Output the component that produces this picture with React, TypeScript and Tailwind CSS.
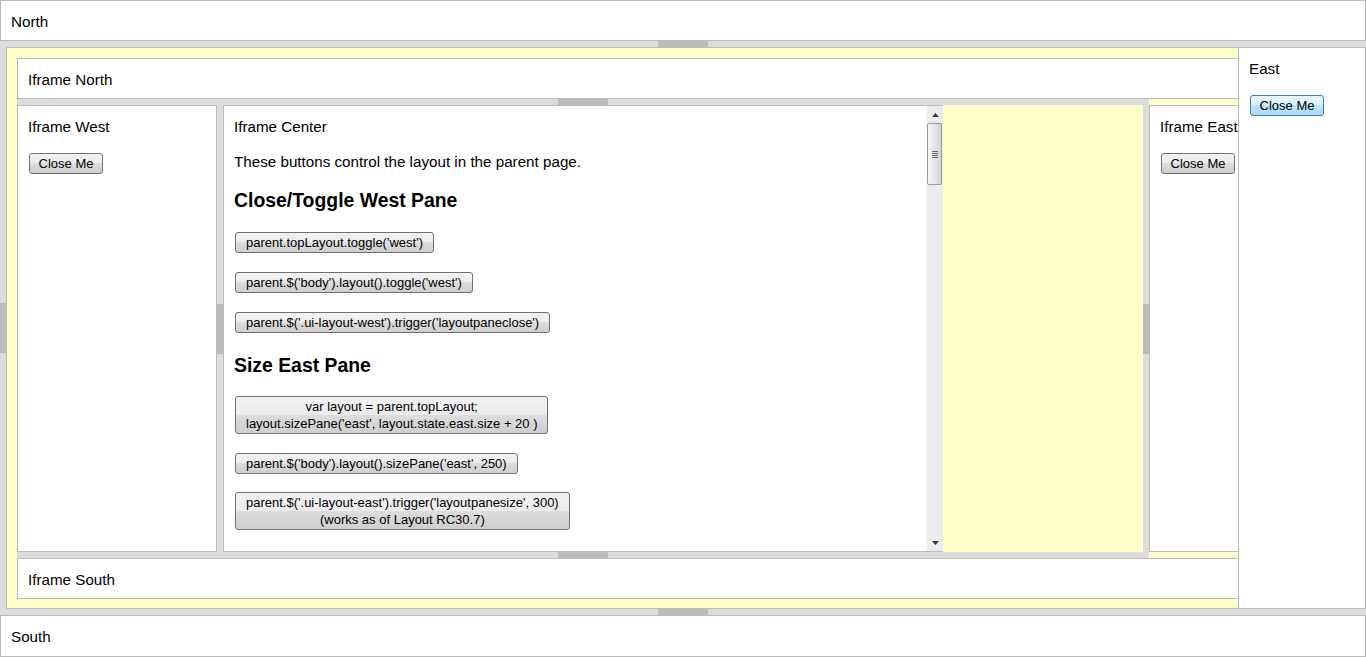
import React from "react";

const HResizer = ({ w }: { w?: string }) => (
  <div className={"h-[6px] shrink-0 bg-[#dddddd] flex justify-center " + (w ?? "w-full")}>
    <div className="w-[50px] h-full bg-[#bcbcbc]" />
  </div>
);

const VResizer = () => (
  <div className="w-[6px] shrink-0 bg-[#dddddd] flex items-center">
    <div className="h-[50px] w-full bg-[#bcbcbc]" />
  </div>
);

const Btn = ({ children, mt }: { children: React.ReactNode; mt: string }) => (
  <button
    className={
      "block ml-[1px] border border-[#707070] rounded-[3px] px-[10px] py-[1px] text-[13px] leading-[17px] text-black text-center font-['Liberation_Sans',Arial,sans-serif] bg-[linear-gradient(#f2f2f2,#ebebeb_50%,#dddddd_50%,#cfcfcf)] " +
      mt
    }
  >
    {children}
  </button>
);

const CloseBtn = ({ mt }: { mt: string }) => (
  <button
    className={
      "block ml-[1px] w-[74px] border border-[#707070] rounded-[3px] py-[1px] text-[13px] leading-[17px] text-black text-center font-['Liberation_Sans',Arial,sans-serif] bg-[linear-gradient(#f2f2f2,#ebebeb_50%,#dddddd_50%,#cfcfcf)] " +
      mt
    }
  >
    Close Me
  </button>
);

const BlueBtn = ({ mt }: { mt: string }) => (
  <button
    className={
      "block ml-[1px] w-[74px] border border-[#3c7fb1] rounded-[3px] py-[1px] text-[13px] leading-[17px] text-black text-center font-['Liberation_Sans',Arial,sans-serif] bg-[linear-gradient(#eaf6fd,#d9f0fc_50%,#bee6fd_50%,#a7d9f5)] " +
      mt
    }
  >
    Close Me
  </button>
);

const Scrollbar = () => (
  <div className="w-[17px] shrink-0 h-full bg-[#ececec] border-l border-[#f6f6f6] flex flex-col">
    <div className="h-[17px] shrink-0 flex items-center justify-center">
      <svg width="7" height="4" viewBox="0 0 7 4">
        <path d="M3.5 0 L7 4 L0 4 Z" fill="#3a3a3a" />
      </svg>
    </div>
    <div className="h-[62px] w-[15px] shrink-0 rounded-[2px] border border-[#9a9a9a] bg-[linear-gradient(to_right,#f6f6f6,#e2e2e2_60%,#d2d2d2)] flex flex-col items-center justify-center gap-[1px]">
      <div className="w-[6px] h-[1px] bg-[#6a6a6a]" />
      <div className="w-[6px] h-[1px] bg-[#6a6a6a]" />
      <div className="w-[6px] h-[1px] bg-[#6a6a6a]" />
      <div className="w-[6px] h-[1px] bg-[#6a6a6a]" />
    </div>
    <div className="flex-1" />
    <div className="h-[17px] shrink-0 flex items-center justify-center">
      <svg width="7" height="4" viewBox="0 0 7 4">
        <path d="M0 0 L7 0 L3.5 4 Z" fill="#3a3a3a" />
      </svg>
    </div>
  </div>
);

export default function App() {
  return (
    <div className="w-[1366px] h-[657px] overflow-hidden bg-[#dddddd] flex flex-col text-black text-[15.2px] leading-[20px] font-['Liberation_Sans',Arial,sans-serif]">
      <div className="h-[41px] shrink-0 bg-white border border-[#bbbbbb] flex items-center pl-[10px] pt-[2px]">
        North
      </div>
      <HResizer />
      <div className="h-[562px] shrink-0 flex">
        <VResizer />
        <div className="w-[1232px] shrink-0 bg-[#ffffcc] border-l border-t border-b border-[#bbbbbb] pt-[10px] pl-[10px] pb-[9px] overflow-hidden">
          <div className="w-[1340px] h-full flex flex-col">
            <div className="h-[41px] shrink-0 bg-white border border-[#bbbbbb] flex items-center pl-[10px] pt-[2px]">
              Iframe North
            </div>
            <HResizer w="w-[1132px]" />
            <div className="h-[447px] shrink-0 flex">
              <div className="w-[200px] shrink-0 bg-white border border-[#bbbbbb] px-[10px] pt-[11px]">
                <div>Iframe West</div>
                <CloseBtn mt="mt-[16px]" />
              </div>
              <VResizer />
              <div className="w-[720px] shrink-0 bg-white border-l border-t border-b border-[#bbbbbb] flex">
                <div className="flex-1 overflow-hidden pl-[10px] pt-[11px]">
                  <div>Iframe Center</div>
                  <p className="mt-[15px]">These buttons control the layout in the parent page.</p>
                  <h3 className="mt-[17px] text-[19.4px] leading-[22px] font-bold">Close/Toggle West Pane</h3>
                  <Btn mt="mt-[21px]">parent.topLayout.toggle('west')</Btn>
                  <Btn mt="mt-[19px]">parent.$('body').layout().toggle('west')</Btn>
                  <Btn mt="mt-[19px]">parent.$('.ui-layout-west').trigger('layoutpaneclose')</Btn>
                  <h3 className="mt-[21px] text-[19.4px] leading-[22px] font-bold">Size East Pane</h3>
                  <Btn mt="mt-[20px]">
                    var layout = parent.topLayout;
                    <br />
                    layout.sizePane('east', layout.state.east.size + 20 )
                  </Btn>
                  <Btn mt="mt-[19px]">parent.$('body').layout().sizePane('east', 250)</Btn>
                  <Btn mt="mt-[18px]">
                    parent.$('.ui-layout-east').trigger('layoutpanesize', 300)
                    <br />
                    (works as of Layout RC30.7)
                  </Btn>
                </div>
                <Scrollbar />
              </div>
              <div className="w-[200px] shrink-0" />
              <VResizer />
              <div className="w-[200px] shrink-0 bg-white border border-[#bbbbbb] px-[10px] pt-[11px]">
                <div className="whitespace-nowrap">Iframe East</div>
                <CloseBtn mt="mt-[16px]" />
              </div>
            </div>
            <HResizer w="w-[1132px]" />
            <div className="h-[41px] shrink-0 bg-white border border-[#bbbbbb] flex items-center pl-[10px] pt-[2px]">
              Iframe South
            </div>
          </div>
        </div>
        <div className="w-[128px] shrink-0 bg-white border border-[#bbbbbb] px-[10px] pt-[11px]">
          <div>East</div>
          <BlueBtn mt="mt-[16px]" />
        </div>
      </div>
      <HResizer />
      <div className="h-[42px] shrink-0 bg-white border border-[#bbbbbb] flex items-center pl-[10px] pt-[2px]">
        South
      </div>
    </div>
  );
}
